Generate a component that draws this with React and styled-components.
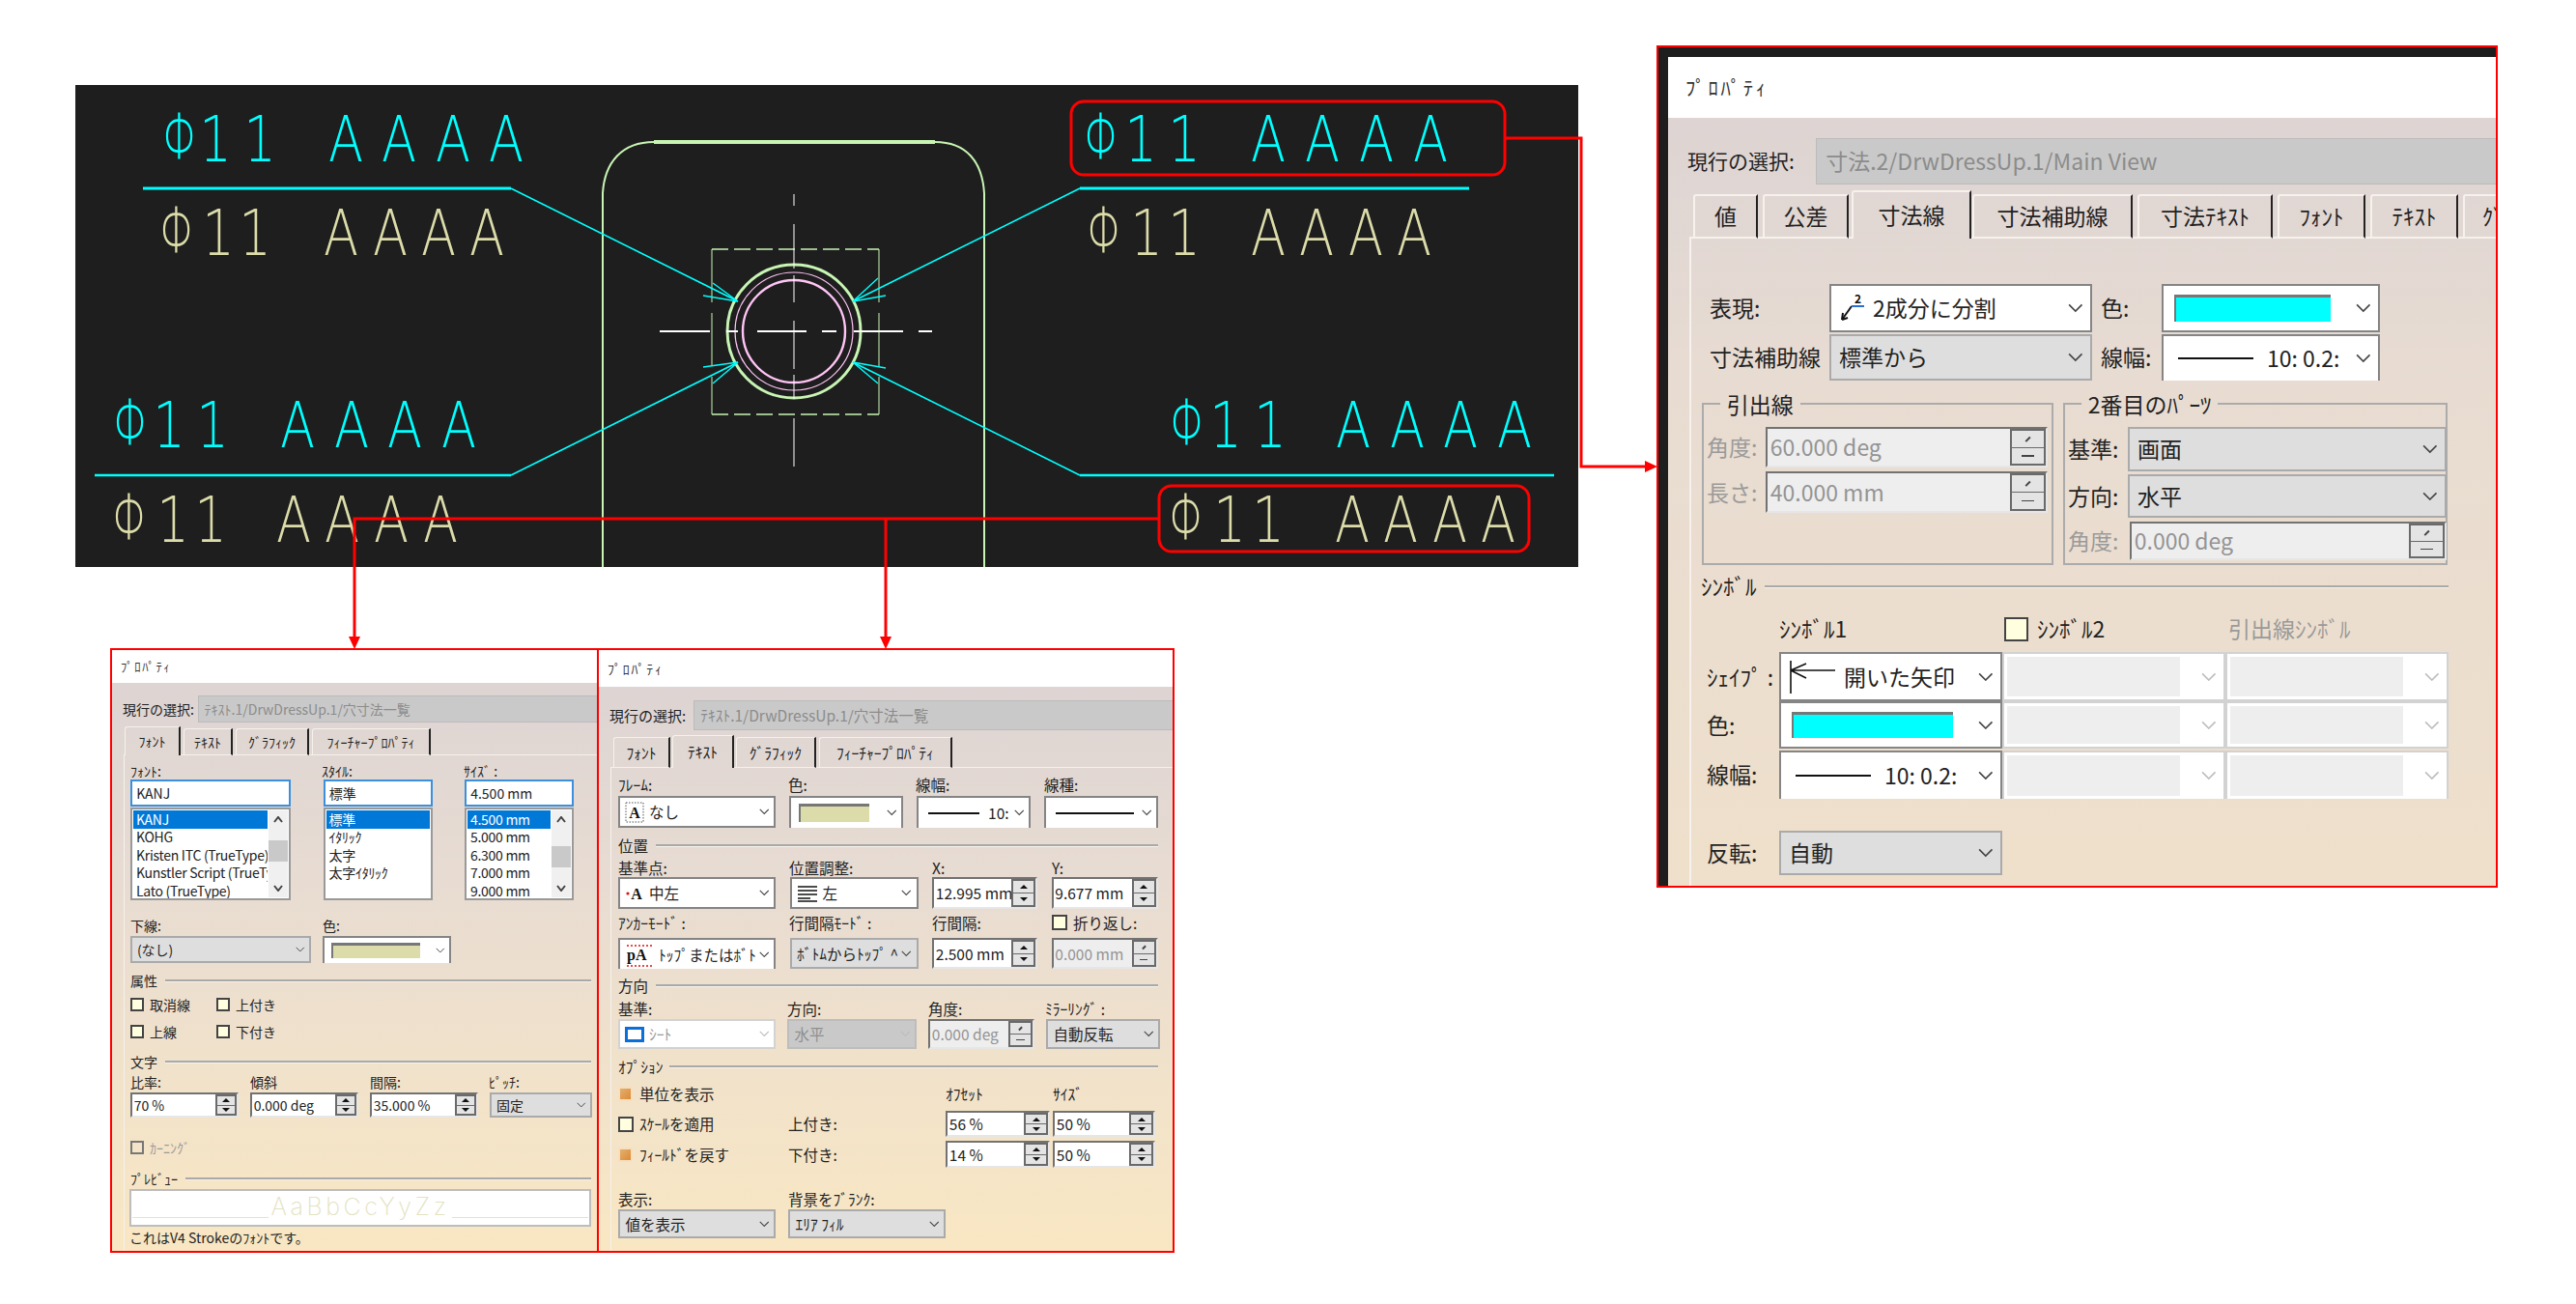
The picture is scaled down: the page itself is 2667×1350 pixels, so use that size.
import React from "react";
import styled, { createGlobalStyle } from "styled-components";

const GlobalStyle = createGlobalStyle`
  html, body { margin: 0; background: #fff; }
  body { width: 2667px; height: 1350px; overflow: hidden; font-family: "Noto Sans CJK JP", sans-serif; }
`;

const Page = styled.div`
  position: relative;
  display: flex;
  align-items: flex-start;
  box-sizing: border-box;
  width: 2667px;
  height: 1350px;
  padding-left: 78px;
`;

const LeftColumn = styled.div`
  width: 1556px;
  margin-top: 88px;
`;

const DrawingSvg = styled.svg`
  display: block;
  width: 1556px;
  height: 499px;
  background: #1e1e1e;
`;

const DimLabel = styled.text`
  font-family: "DejaVu Sans ExtraLight", "DejaVu Sans Light", "Inter", sans-serif;
  font-weight: 200;
  font-size: 66px;
  text-anchor: middle;
`;

const DialogRow = styled.div`
  display: flex;
  margin: 84px 0 0 36px;
`;

const Dialog = styled.div`
  display: flex;
  flex-direction: column;
  flex: none;
  box-sizing: border-box;
  width: ${(p) => p.$w}px;
  height: ${(p) => p.$h}px;
  margin: ${(p) => p.$margin || "0"};
  border: 2px solid #f00;
  overflow: hidden;
  font-size: ${(p) => p.$fs}px;
  line-height: 1.2;
  color: #222;
`;

const ShotFrame = styled.div`
  display: flex;
  flex-direction: column;
  flex: 1;
  min-height: 0;
  border-left: 10px solid #1e1e1e;
  border-top: 10px solid #1e1e1e;
`;

const TitleBar = styled.div`
  display: flex;
  align-items: center;
  flex: none;
  height: ${(p) => p.$h}px;
  padding-left: ${(p) => p.$pl}px;
  background: #fff;
  font-size: 0.9em;
  letter-spacing: 0.13em;
  color: #333;
`;

const Body = styled.div`
  display: flex;
  flex-direction: column;
  flex: 1;
  min-height: 0;
  background: linear-gradient(#ddd4d3, #e8dcd2 35%, ${(p) => p.$end});
`;

const SelRow = styled.div`
  display: grid;
  flex: none;
  grid-template-columns: ${(p) => p.$col}px 1fr;
  height: ${(p) => p.$h}px;
  margin-top: ${(p) => p.$mt}px;
  padding-left: ${(p) => p.$pl}px;
`;

const SelLabel = styled.div`
  display: flex;
  align-items: center;
  font-size: ${(p) => p.$fs}px;
  white-space: nowrap;
`;

const SelField = styled.div`
  display: flex;
  align-items: center;
  padding-left: 0.4em;
  background: #c9c9c9;
  border: 1px solid #bbb;
  border-right: none;
  color: #8c8c8c;
  white-space: nowrap;
`;

const TabStrip = styled.div`
  display: flex;
  align-items: flex-end;
  flex: none;
  height: ${(p) => p.$h}px;
  margin: ${(p) => p.$mt}px 0 0 ${(p) => p.$ml}px;
`;

const TabFill = styled.div`
  flex: ${(p) => (p.$w ? `0 0 ${p.$w}px` : 1)};
  border-bottom: ${(p) => p.$line}px solid #f6f1ec;
`;

const Tab = styled.div`
  display: flex;
  align-items: center;
  justify-content: center;
  flex: none;
  box-sizing: border-box;
  width: ${(p) => p.$w}px;
  height: ${(p) => (p.$on ? "100%" : `calc(100% - ${p.$drop}px)`)};
  border-top: ${(p) => p.$line}px solid #f6f1ec;
  border-left: ${(p) => p.$line}px solid #f6f1ec;
  border-right: 2px solid #222;
  border-bottom: ${(p) => (p.$on ? 0 : p.$line)}px solid #f6f1ec;
  border-top-left-radius: 3px;
  white-space: nowrap;
  overflow: hidden;
`;

const Panel = styled.div`
  flex: 1;
  min-height: 0;
  margin-left: ${(p) => p.$ml}px;
  padding-left: ${(p) => p.$pl}px;
  border-left: ${(p) => p.$line}px solid #f6f1ec;
`;

const Row = styled.div`
  display: grid;
  grid-template-columns: ${(p) => p.$cols};
  column-gap: ${(p) => p.$gap || 0}px;
  height: ${(p) => p.$h}px;
  margin-top: ${(p) => p.$mt || 0}px;
  margin-left: ${(p) => p.$ml || 0}px;
`;

const Lab = styled.div`
  display: flex;
  align-items: center;
  min-width: 0;
  margin-left: ${(p) => p.$ml || 0}px;
  white-space: nowrap;
  color: ${(p) => (p.$off ? "#9a9a9a" : "inherit")};
`;

const ComboBox = styled.div`
  display: flex;
  align-items: center;
  box-sizing: border-box;
  min-width: 0;
  height: 100%;
  padding: 0 0.3em 0 0.35em;
  overflow: hidden;
  white-space: nowrap;
  border: 2px solid ${(p) => ({ white: "#858585", gray: "#aaa", dark: "#bdbdbd", faded: "#d2d2d2" }[p.$kind])};
  border-bottom-width: ${(p) => (p.$open ? 0 : 2)}px;
  background: ${(p) => ({ white: "#fff", gray: "#dedede", dark: "#c9c9c9", faded: "#fff" }[p.$kind])};
  color: ${(p) => (p.$kind === "dark" ? "#8f8f8f" : "inherit")};
`;

const ComboText = styled.span`
  flex: 1;
  align-self: stretch;
  display: flex;
  align-items: center;
  gap: 0.3em;
  min-width: 0;
  overflow: hidden;
`;

const ChevronSvg = styled.svg`
  flex: none;
  width: 0.68em;
  height: 0.41em;
  margin-left: 0.2em;
  fill: none;
  stroke: ${(p) => (p.$off ? "#bdbdbd" : "#444")};
  stroke-width: 1.4;
`;

const Swatch = styled.span`
  flex: 1;
  align-self: stretch;
  margin: 0.38em 0.95em 0.38em 0.15em;
  background: ${(p) => p.$color};
  border-top: 3px solid #777;
  border-left: 2px solid #777;
`;

const FadedFill = styled.span`
  flex: 1;
  align-self: stretch;
  margin: 3px 0.8em 3px -0.2em;
  background: #eee;
`;

const LineSample = styled.span`
  flex: 0 0 ${(p) => p.$w}em;
  height: 2px;
  margin: 0 0.3em;
  background: #111;
`;

const SpinBox = styled.div`
  display: flex;
  box-sizing: border-box;
  min-width: 0;
  height: 100%;
  margin-left: ${(p) => p.$ml || 0}px;
  border: 2px solid;
  border-color: #727272 #e6e6e6 #e6e6e6 #727272;
  background: ${(p) => (p.$off ? "#eee" : "#fff")};
  color: ${(p) => (p.$off ? "#949494" : "inherit")};
`;

const SpinText = styled.span`
  flex: 1;
  display: flex;
  align-items: center;
  min-width: 0;
  padding-left: 0.12em;
  overflow: hidden;
  white-space: nowrap;
`;

const SpinBtns = styled.span`
  display: flex;
  flex-direction: column;
  flex: none;
  gap: 1px;
  box-sizing: border-box;
  width: 1.6em;
  border: 2px solid #6a6a6a;
  background: #6a6a6a;
`;

const SpinBtn = styled.span`
  display: flex;
  align-items: center;
  justify-content: center;
  flex: 1;
  background: #e4e4e4;
`;

const Tri = styled.i`
  width: 0;
  height: 0;
  border-left: 0.32em solid transparent;
  border-right: 0.32em solid transparent;
  ${(p) => (p.$up ? "border-bottom" : "border-top")}: 0.32em solid #111;
`;

const OffMark = styled.i`
  width: 0.55em;
  height: 1.5px;
  background: #444;
  transform: rotate(${(p) => (p.$up ? "-45deg" : "0deg")}) scaleX(${(p) => (p.$up ? 0.5 : 1)});
`;

const GroupRow = styled.div`
  display: grid;
  grid-template-columns: 364px 398px;
  column-gap: 10px;
  height: 182px;
  margin-top: 9px;
`;

const Group = styled.fieldset`
  box-sizing: border-box;
  min-width: 0;
  margin: 0;
  padding: 0 3px;
  border: 2px solid #ababab;
`;

const GroupTitle = styled.legend`
  margin-left: 0.6em;
  padding: 0 0.3em;
  line-height: 30px;
`;

const Sep = styled.div`
  display: flex;
  align-items: center;
  gap: ${(p) => p.$gap || 8}px;
  width: ${(p) => p.$w}px;
  height: ${(p) => p.$h}px;
  margin-top: ${(p) => p.$mt}px;
  margin-left: ${(p) => p.$ml || 0}px;
  white-space: nowrap;
  &::after {
    content: "";
    flex: 1;
    height: 2px;
    background: #a9a9a9;
    box-shadow: 0 1px 0 #f8f4ee;
  }
`;

const Check = styled.span`
  flex: none;
  box-sizing: border-box;
  width: ${(p) => p.$s}px;
  height: ${(p) => p.$s}px;
  margin-right: ${(p) => p.$gap}px;
  border: 2px solid ${(p) => (p.$off ? "#777" : "#444")};
  background: ${(p) => (p.$off ? "transparent" : "#ffffe0")};
`;

const OrangeCheck = styled.span`
  flex: none;
  box-sizing: border-box;
  width: 15px;
  height: 15px;
  margin-right: 7px;
  border: 2px solid #f6dfc0;
  background: linear-gradient(135deg, #e2b070, #dd8a34);
`;

const InputBox = styled.div`
  display: flex;
  align-items: center;
  box-sizing: border-box;
  height: 28px;
  padding-left: 0.3em;
  background: #fff;
  border: 2px solid #3b8fdc;
`;

const ListBox = styled.div`
  display: flex;
  box-sizing: border-box;
  height: 96px;
  margin-top: 1px;
  padding: 1px;
  background: #fff;
  border: 2px solid #999;
  overflow: hidden;
`;

const ListItems = styled.div`
  flex: 1;
  min-width: 0;
`;

const ListRow = styled.div`
  display: flex;
  align-items: center;
  height: 18.5px;
  padding-left: 3px;
  overflow: hidden;
  white-space: nowrap;
  letter-spacing: -0.02em;
  background: ${(p) => (p.$on ? "#0078d7" : "transparent")};
  color: ${(p) => (p.$on ? "#fff" : "inherit")};
`;

const ScrollBar = styled.div`
  display: flex;
  flex-direction: column;
  align-items: center;
  flex: 0 0 20px;
  margin-left: 1px;
  background: #f0f0f0;
`;

const ScrollThumb = styled.div`
  flex: none;
  align-self: stretch;
  height: 22px;
  margin-top: ${(p) => p.$top}px;
  background: #c9c9c9;
`;

const ScrollArrow = styled.svg`
  flex: none;
  width: 10px;
  height: 7px;
  margin-top: ${(p) => (p.$down ? "auto" : "6px")};
  margin-bottom: ${(p) => (p.$down ? "6px" : "0")};
  fill: none;
  stroke: #444;
  stroke-width: 2;
`;

const PreviewBox = styled.div`
  display: flex;
  align-items: flex-end;
  box-sizing: border-box;
  width: 478px;
  height: 39px;
  margin: 2px 0 0 -1px;
  padding: 0 1px 7px;
  background: #fff;
  border: 2px solid #bdbdbd;
  &::before, &::after {
    content: "";
    flex: 1;
    height: 1px;
    background: #e6e4c4;
  }
`;

const PreviewText = styled.span`
  padding: 0 2px;
  font-family: "Inter", sans-serif;
  font-weight: 200;
  font-size: 25px;
  line-height: 24px;
  letter-spacing: 3.6px;
  color: #e4e2bf;
`;

const Footer = styled.div`
  display: flex;
  align-items: center;
  height: 18px;
  margin: 2px 0 0 -1px;
  white-space: nowrap;
`;

const ConnectorSvg = styled.svg`
  position: absolute;
  left: 0;
  top: 0;
  width: 2667px;
  height: 1350px;
  pointer-events: none;
`;

const Chevron = ({ off }) => (
  <ChevronSvg $off={off} viewBox="0 0 14 8">
    <polyline points="1,1 7,7 13,1" />
  </ChevronSvg>
);

const Combo = ({ kind = "white", open, off, children }) => (
  <ComboBox $kind={kind} $open={open}>
    <ComboText>{children}</ComboText>
    <Chevron off={off} />
  </ComboBox>
);

const FadedCombo = ({ open }) => (
  <ComboBox $kind="faded" $open={open}>
    <FadedFill />
    <Chevron off />
  </ComboBox>
);

const Spin = ({ value, off, ml }) => (
  <SpinBox $off={off} $ml={ml}>
    <SpinText>{value}</SpinText>
    <SpinBtns>
      <SpinBtn>{off ? <OffMark $up /> : <Tri $up />}</SpinBtn>
      <SpinBtn>{off ? <OffMark /> : <Tri />}</SpinBtn>
    </SpinBtns>
  </SpinBox>
);

const Tabs = ({ items, h, mt, ml, lead, line, drop }) => (
  <TabStrip $h={h} $mt={mt} $ml={ml}>
    <TabFill $w={lead} $line={line} />
    {items.map(([label, w, gap, on]) => (
      <React.Fragment key={label}>
        <Tab $w={w} $on={on} $line={line} $drop={drop}>
          {label}
        </Tab>
        {gap > 0 && <TabFill $w={gap} $line={line} />}
      </React.Fragment>
    ))}
    <TabFill $line={line} />
  </TabStrip>
);

const Scroll = ({ top }) => (
  <ScrollBar>
    <ScrollArrow viewBox="0 0 10 7">
      <polyline points="1,6 5,1 9,6" />
    </ScrollArrow>
    <ScrollThumb $top={top} />
    <ScrollArrow $down viewBox="0 0 10 7">
      <polyline points="1,1 5,6 9,1" />
    </ScrollArrow>
  </ScrollBar>
);

/* small pictures inside the combo boxes */
const SplitIcon = () => (
  <svg width="28" height="30" viewBox="0 0 28 30" style={{ flex: "none" }}>
    <path d="M3 27 L13 13" fill="none" stroke="#111" strokeWidth="2" />
    <path d="M13 13 H26" stroke="#2a6fd0" strokeWidth="2" />
    <path d="M3 27 L4 20 M3 27 L9 25" stroke="#111" strokeWidth="2" />
    <text x="16" y="10" fontSize="12" fontWeight="700" fill="#111">2</text>
  </svg>
);

const OpenArrowIcon = () => (
  <svg width="50" height="34" viewBox="0 0 50 34" style={{ flex: "none" }}>
    <path d="M2 0 V34 M2 10 H48 M2 10 L18 3 M2 10 L18 18" fill="none" stroke="#111" strokeWidth="1.6" />
  </svg>
);

const FrameIcon = () => (
  <svg width="20" height="22" viewBox="0 0 20 22" style={{ flex: "none" }}>
    <rect x="1" y="1" width="18" height="20" fill="#fff" stroke="#555" strokeDasharray="1.5 1.5" />
    <text x="10" y="17" textAnchor="middle" fontFamily="Liberation Serif" fontWeight="700" fontSize="16" fill="#111">A</text>
  </svg>
);

const PointIcon = () => (
  <svg width="20" height="20" viewBox="0 0 20 20" style={{ flex: "none" }}>
    <circle cx="3" cy="10" r="1.6" fill="#e01010" />
    <text x="12" y="16" textAnchor="middle" fontFamily="Liberation Serif" fontWeight="700" fontSize="16" fill="#111">A</text>
  </svg>
);

const AlignIcon = () => (
  <svg width="22" height="18" viewBox="0 0 22 18" style={{ flex: "none" }}>
    <path d="M1 2 H21 M1 6 H21 M1 10 H21 M1 14 H14 M1 17 H21" stroke="#111" strokeWidth="1.5" />
  </svg>
);

const AnchorIcon = () => (
  <svg width="30" height="26" viewBox="0 0 30 26" style={{ flex: "none" }}>
    <path d="M2 4 H29 M2 25 H29" stroke="#e01010" strokeDasharray="2 2" strokeWidth="1.4" />
    <text x="2" y="19" fontFamily="Liberation Serif" fontWeight="700" fontSize="16" fill="#111">pA</text>
  </svg>
);

const SheetIcon = () => (
  <svg width="20" height="16" viewBox="0 0 20 16" style={{ flex: "none" }}>
    <rect x="1.5" y="1.5" width="17" height="13" fill="#fff" stroke="#0a6fd8" strokeWidth="3" />
  </svg>
);

/* the stroke font of the drawing is tall and narrow, the diameter sign even more */
const SC = 0.8;
const PHI_SC = 0.66;
const Dim = ({ color, xs, y }) => (
  <g fill={color}>
    <DimLabel y={y - 2} x={xs[0] / PHI_SC} transform={`scale(${PHI_SC} 1)`}>Φ</DimLabel>
    <DimLabel
      y={y}
      x={xs.slice(1).map((v) => v / SC).join(" ")}
      transform={`scale(${SC} 1)`}
    >
      11 AAAA
    </DimLabel>
  </g>
);

const CYAN = "#00ffff";
const KHAKI = "#dcdcaa";
const GREEN = "#c8f5b4";
const PINK = "#ffc4f5";

const Drawing = () => (
  <DrawingSvg viewBox="0 0 1556 499">
    <g fill="none" stroke={GREEN}>
      <path d="M546 499 V112" strokeWidth="2" />
      <path d="M941 499 V112" strokeWidth="2" />
      <path d="M546 112 C548 80 566 59 599 59" strokeWidth="2" />
      <path d="M941 112 C939 80 923 59 890 59" strokeWidth="2" />
      <path d="M599 59 H890" strokeWidth="4" />
      <circle cx="744" cy="255" r="69" strokeWidth="3" />
      <path d="M659 170 H832 M659 341 H832" strokeWidth="1.6" strokeDasharray="17 6" />
      <path d="M659 170 V341 M832 170 V341" strokeWidth="1" strokeDasharray="55 11" />
    </g>
    <g fill="none" stroke={PINK}>
      <circle cx="744" cy="255" r="61" strokeWidth="1.2" />
      <circle cx="744" cy="255" r="53" strokeWidth="2.4" />
    </g>
    <g stroke="#fff">
      <path d="M605 255 H657 M674 255 H686 M706 255 H757 M773 255 H788 M806 255 H857 M873 255 H887" strokeWidth="2" />
      <path d="M744 113 V125 M744 144 V190 M744 197 V225 M744 244 V294 M744 300 V325 M744 345 V395" strokeWidth="1" />
    </g>
    <g fill="none" stroke={CYAN}>
      <path d="M70 107 H451 M1040 107 H1443" strokeWidth="3" />
      <path d="M20 404 H451 M1040 404 H1531" strokeWidth="2.4" />
      <path d="M451 107 L686 224" strokeWidth="1.6" />
      <path d="M1040 107 L805 224" strokeWidth="1.6" />
      <path d="M451 404 L686 287" strokeWidth="1.6" />
      <path d="M1040 404 L805 287" strokeWidth="1.6" />
      <path d="M686 224 L650 218 M686 224 L660 205 M805 224 L839 218 M805 224 L831 200 M686 287 L650 292 M686 287 L660 309 M805 287 L839 293 M805 287 L831 309" strokeWidth="1.4" />
    </g>
    <Dim color={CYAN} y={79} xs={[109, 145, 191, 235, 280, 335, 391, 446]} />
    <Dim color={KHAKI} y={176} xs={[106, 148, 186, 230, 275, 326, 376, 426]} />
    <Dim color={CYAN} y={79} xs={[1063, 1103, 1148, 1190, 1235, 1291, 1347, 1403]} />
    <Dim color={KHAKI} y={176} xs={[1066, 1109, 1148, 1190, 1235, 1285, 1336, 1386]} />
    <Dim color={CYAN} y={375} xs={[58, 97, 142, 185, 230, 286, 341, 397]} />
    <Dim color={CYAN} y={375} xs={[1152, 1191, 1237, 1280, 1323, 1379, 1434, 1490]} />
    <Dim color={KHAKI} y={473} xs={[57, 101, 140, 183, 226, 276, 327, 378]} />
    <Dim color={KHAKI} y={473} xs={[1151, 1195, 1235, 1278, 1322, 1372, 1423, 1473]} />
  </DrawingSvg>
);

const FontDialog = () => (
  <Dialog $w={506} $h={626} $fs={14}>
    <TitleBar $h={34} $pl={9}>ﾌﾟﾛﾊﾟﾃｨ</TitleBar>
    <Body $end="#f9e7c3">
      <SelRow $h={28} $mt={13} $pl={11} $col={78}>
        <SelLabel $fs={14}>現行の選択:</SelLabel>
        <SelField>ﾃｷｽﾄ.1/DrwDressUp.1/穴寸法一覧</SelField>
      </SelRow>
      <Tabs
        h={30}
        mt={4}
        ml={12}
        lead={1}
        line={1}
        drop={2}
        items={[
          ["ﾌｫﾝﾄ", 58, 3, true],
          ["ﾃｷｽﾄ", 51, 3],
          ["ｸﾞﾗﾌｨｯｸ", 76, 3],
          ["ﾌｨｰﾁｬｰﾌﾟﾛﾊﾟﾃｨ", 123, 0],
        ]}
      />
      <Panel $ml={12} $pl={6} $line={1}>
        <Row $mt={7} $h={18} $cols="198px 147px 113px">
          <Lab>ﾌｫﾝﾄ:</Lab>
          <Lab>ｽﾀｲﾙ:</Lab>
          <Lab>ｻｲｽﾞ :</Lab>
        </Row>
        <Row $h={125} $cols="166px 113px 113px" $gap={33.5}>
          <div>
            <InputBox>KANJ</InputBox>
            <ListBox>
              <ListItems>
                <ListRow $on>KANJ</ListRow>
                <ListRow>KOHG</ListRow>
                <ListRow>Kristen ITC (TrueType)</ListRow>
                <ListRow>Kunstler Script (TrueType)</ListRow>
                <ListRow>Lato (TrueType)</ListRow>
              </ListItems>
              <Scroll top={18} />
            </ListBox>
          </div>
          <div>
            <InputBox>標準</InputBox>
            <ListBox>
              <ListItems>
                <ListRow $on>標準</ListRow>
                <ListRow>ｲﾀﾘｯｸ</ListRow>
                <ListRow>太字</ListRow>
                <ListRow>太字ｲﾀﾘｯｸ</ListRow>
              </ListItems>
            </ListBox>
          </div>
          <div>
            <InputBox>4.500 mm</InputBox>
            <ListBox>
              <ListItems>
                <ListRow $on>4.500 mm</ListRow>
                <ListRow>5.000 mm</ListRow>
                <ListRow>6.300 mm</ListRow>
                <ListRow>7.000 mm</ListRow>
                <ListRow>9.000 mm</ListRow>
              </ListItems>
              <Scroll top={24} />
            </ListBox>
          </div>
        </Row>
        <Row $mt={17} $h={18} $cols="199px 133px">
          <Lab>下線:</Lab>
          <Lab>色:</Lab>
        </Row>
        <Row $mt={2} $h={28} $cols="187px 133px" $gap={12}>
          <Combo kind="gray">(なし)</Combo>
          <Combo open><Swatch $color={KHAKI} /></Combo>
        </Row>
        <Sep $mt={9} $h={18} $w={477}>属性</Sep>
        <Row $mt={7} $h={18} $cols="89px 100px">
          <Lab><Check $s={14} $gap={6} />取消線</Lab>
          <Lab><Check $s={14} $gap={6} />上付き</Lab>
        </Row>
        <Row $mt={10} $h={18} $cols="89px 100px">
          <Lab><Check $s={14} $gap={6} />上線</Lab>
          <Lab><Check $s={14} $gap={6} />下付き</Lab>
        </Row>
        <Sep $mt={13} $h={18} $w={477}>文字</Sep>
        <Row $mt={3} $h={18} $cols="124px 124px 123px 106px">
          <Lab>比率:</Lab>
          <Lab>傾斜</Lab>
          <Lab>間隔:</Lab>
          <Lab>ﾋﾟｯﾁ:</Lab>
        </Row>
        <Row $mt={2} $h={26} $cols="112px 112px 112px 106px" $gap={12}>
          <Spin value="70 %" />
          <Spin value="0.000 deg" />
          <Spin value="35.000 %" />
          <Combo kind="gray">固定</Combo>
        </Row>
        <Row $mt={22} $h={18} $cols="200px">
          <Lab $off><Check $off $s={14} $gap={6} />ｶｰﾆﾝｸﾞ</Lab>
        </Row>
        <Sep $mt={14} $h={18} $w={477}>ﾌﾟﾚﾋﾞｭｰ</Sep>
        <PreviewBox>
          <PreviewText>AaBbCcYyZz</PreviewText>
        </PreviewBox>
        <Footer>これはV4 Strokeのﾌｫﾝﾄです。</Footer>
      </Panel>
    </Body>
  </Dialog>
);

const TextDialog = () => (
  <Dialog $w={598} $h={626} $fs={15.5} $margin="0 0 0 -2px">
    <TitleBar $h={38} $pl={9}>ﾌﾟﾛﾊﾟﾃｨ</TitleBar>
    <Body $end="#f9e7c3">
      <SelRow $h={31} $mt={14} $pl={11} $col={87}>
        <SelLabel $fs={15}>現行の選択:</SelLabel>
        <SelField>ﾃｷｽﾄ.1/DrwDressUp.1/穴寸法一覧</SelField>
      </SelRow>
      <Tabs
        h={34}
        mt={5}
        ml={12}
        lead={3}
        line={1}
        drop={2}
        items={[
          ["ﾌｫﾝﾄ", 59, 2],
          ["ﾃｷｽﾄ", 64, 2, true],
          ["ｸﾞﾗﾌｨｯｸ", 83, 3],
          ["ﾌｨｰﾁｬｰﾌﾟﾛﾊﾟﾃｨ", 138, 0],
        ]}
      />
      <Panel $ml={12} $pl={7} $line={1}>
        <Row $mt={7} $h={20} $cols="176px 132px 133px 118px">
          <Lab>ﾌﾚｰﾑ:</Lab>
          <Lab>色:</Lab>
          <Lab>線幅:</Lab>
          <Lab>線種:</Lab>
        </Row>
        <Row $mt={2} $h={33} $cols="163px 118px 118px 118px" $gap={14}>
          <Combo><FrameIcon />なし</Combo>
          <Combo open><Swatch $color={KHAKI} /></Combo>
          <Combo open><LineSample $w={3.4} />10:</Combo>
          <Combo open><LineSample $w={5.2} /></Combo>
        </Row>
        <Sep $mt={8} $h={20} $w={559}>位置</Sep>
        <Row $mt={3} $h={20} $cols="177px 148px 124px 110px">
          <Lab>基準点:</Lab>
          <Lab>位置調整:</Lab>
          <Lab>X:</Lab>
          <Lab>Y:</Lab>
        </Row>
        <Row $h={33} $cols="163px 133px 109px 110px" $gap={14.5}>
          <Combo><PointIcon />中左</Combo>
          <Combo><AlignIcon />左</Combo>
          <Spin value="12.995 mm" />
          <Spin value="9.677 mm" />
        </Row>
        <Row $mt={4} $h={20} $cols="177px 148px 124px 110px">
          <Lab>ｱﾝｶｰﾓｰﾄﾞ :</Lab>
          <Lab>行間隔ﾓｰﾄﾞ :</Lab>
          <Lab>行間隔:</Lab>
          <Lab><Check $s={16} $gap={6} />折り返し:</Lab>
        </Row>
        <Row $mt={6} $h={32} $cols="163px 133px 109px 110px" $gap={14.5}>
          <Combo open><AnchorIcon />ﾄｯﾌﾟまたはﾎﾞﾄﾑ</Combo>
          <Combo kind="gray">ﾎﾞﾄﾑからﾄｯﾌﾟ ^</Combo>
          <Spin value="2.500 mm" />
          <Spin off value="0.000 mm" />
        </Row>
        <Sep $mt={7} $h={20} $w={559}>方向</Sep>
        <Row $mt={4} $h={20} $cols="175px 146px 121px 118px">
          <Lab>基準:</Lab>
          <Lab>方向:</Lab>
          <Lab>角度:</Lab>
          <Lab>ﾐﾗｰﾘﾝｸﾞ :</Lab>
        </Row>
        <Row $mt={1} $h={31} $cols="163px 134px 110px 118px" $gap={12}>
          <ComboBox $kind="faded">
            <ComboText><SheetIcon /><Lab $off>ｼｰﾄ</Lab></ComboText>
            <Chevron off />
          </ComboBox>
          <Combo kind="dark" off>水平</Combo>
          <Spin off value="0.000 deg" />
          <Combo kind="gray">自動反転</Combo>
        </Row>
        <Sep $mt={8} $h={20} $w={559} $gap={6}>ｵﾌﾟｼｮﾝ</Sep>
        <Row $mt={8} $h={20} $cols="339px 111px 108px">
          <Lab><OrangeCheck />単位を表示</Lab>
          <Lab>ｵﾌｾｯﾄ</Lab>
          <Lab>ｻｲｽﾞ</Lab>
        </Row>
        <Row $mt={8} $h={27} $cols="176px 163px 108px 109px">
          <Lab><Check $s={16} $gap={6} />ｽｹｰﾙを適用</Lab>
          <Lab>上付き:</Lab>
          <Spin value="56 %" />
          <Spin ml={3} value="50 %" />
        </Row>
        <Row $mt={4} $h={28} $cols="176px 163px 108px 109px">
          <Lab><OrangeCheck />ﾌｨｰﾙﾄﾞを戻す</Lab>
          <Lab>下付き:</Lab>
          <Spin value="14 %" />
          <Spin ml={3} value="50 %" />
        </Row>
        <Row $mt={22} $h={20} $cols="176px 176px">
          <Lab>表示:</Lab>
          <Lab>背景をﾌﾞﾗﾝｸ:</Lab>
        </Row>
        <Row $mt={1} $h={30} $cols="163px 163px" $gap={13}>
          <Combo kind="gray">値を表示</Combo>
          <Combo kind="gray">ｴﾘｱ ﾌｨﾙ</Combo>
        </Row>
      </Panel>
    </Body>
  </Dialog>
);

const SYMBOL_COLS = "80px 231px 231px 231px";

const DimensionDialog = () => (
  <Dialog $w={871} $h={872} $fs={23} $margin="47px 0 0 81px">
    <ShotFrame>
      <TitleBar $h={63} $pl={18}>ﾌﾟﾛﾊﾟﾃｨ</TitleBar>
      <Body $end="#efe0cb">
        <SelRow $h={48} $mt={21} $pl={20} $col={133}>
          <SelLabel $fs={21}>現行の選択:</SelLabel>
          <SelField>寸法.2/DrwDressUp.1/Main View</SelField>
        </SelRow>
        <Tabs
          h={50}
          mt={6}
          ml={22}
          lead={4}
          line={2}
          drop={4}
          items={[
            ["値", 67, 5],
            ["公差", 89, 3],
            ["寸法線", 124, 1, true],
            ["寸法補助線", 166, 5],
            ["寸法ﾃｷｽﾄ", 140, 5],
            ["ﾌｫﾝﾄ", 91, 5],
            ["ﾃｷｽﾄ", 91, 5],
            ["ｸﾞﾗﾌｨｯｸ", 120, 0],
          ]}
        />
        <Panel $ml={22} $pl={11} $line={2}>
          <Row $mt={47} $h={50} $ml={8} $cols="124px 272px 72px 226px">
            <Lab>表現:</Lab>
            <Combo><SplitIcon />2成分に分割</Combo>
            <Lab $ml={9}>色:</Lab>
            <Combo><Swatch $color={CYAN} /></Combo>
          </Row>
          <Row $mt={2} $h={48} $ml={8} $cols="124px 272px 72px 226px">
            <Lab>寸法補助線</Lab>
            <Combo kind="gray">標準から</Combo>
            <Lab $ml={9}>線幅:</Lab>
            <Combo open><LineSample $w={3.4} />10: 0.2:</Combo>
          </Row>
          <GroupRow>
            <Group>
              <GroupTitle>引出線</GroupTitle>
              <Row $mt={9} $h={42} $cols="61px 292px">
                <Lab $off>角度:</Lab>
                <Spin off value="60.000 deg" />
              </Row>
              <Row $mt={4} $h={43} $cols="61px 292px">
                <Lab $off>長さ:</Lab>
                <Spin off value="40.000 mm" />
              </Row>
            </Group>
            <Group>
              <GroupTitle>2番目のﾊﾟｰﾂ</GroupTitle>
              <Row $mt={9} $h={46} $cols="62px 330px">
                <Lab>基準:</Lab>
                <Combo kind="gray">画面</Combo>
              </Row>
              <Row $mt={3} $h={45} $cols="62px 330px">
                <Lab>方向:</Lab>
                <Combo kind="gray">水平</Combo>
              </Row>
              <Row $mt={4} $h={40} $cols="62px 330px">
                <Lab $off>角度:</Lab>
                <Spin off ml={2} value="0.000 deg" />
              </Row>
            </Group>
          </GroupRow>
          <Sep $mt={7} $h={30} $w={774} $ml={-1}>ｼﾝﾎﾞﾙ</Sep>
          <Row $mt={14} $h={30} $cols={SYMBOL_COLS}>
            <span />
            <Lab>ｼﾝﾎﾞﾙ1</Lab>
            <Lab $ml={2}><Check $s={25} $gap={9} />ｼﾝﾎﾞﾙ2</Lab>
            <Lab $off $ml={3}>引出線ｼﾝﾎﾞﾙ</Lab>
          </Row>
          <Row $mt={9} $h={51} $cols={SYMBOL_COLS}>
            <Lab $ml={5}>ｼｪｲﾌﾟ :</Lab>
            <Combo><OpenArrowIcon />開いた矢印</Combo>
            <FadedCombo />
            <FadedCombo />
          </Row>
          <Row $h={49} $cols={SYMBOL_COLS}>
            <Lab $ml={5}>色:</Lab>
            <Combo><Swatch $color={CYAN} /></Combo>
            <FadedCombo />
            <FadedCombo />
          </Row>
          <Row $mt={2} $h={50} $cols={SYMBOL_COLS}>
            <Lab $ml={5}>線幅:</Lab>
            <Combo open><LineSample $w={3.4} />10: 0.2:</Combo>
            <FadedCombo open />
            <FadedCombo open />
          </Row>
          <Row $mt={33} $h={46} $cols={SYMBOL_COLS}>
            <Lab $ml={5}>反転:</Lab>
            <Combo kind="gray">自動</Combo>
          </Row>
        </Panel>
      </Body>
    </ShotFrame>
  </Dialog>
);

const Connectors = () => (
  <ConnectorSvg viewBox="0 0 2667 1350">
    <g fill="none" stroke="#f00" strokeWidth="3">
      <rect x="1109" y="105" width="449" height="76" rx="13" />
      <rect x="1200" y="503" width="383" height="68" rx="13" />
      <path d="M1558 143 H1637 V483 H1704" />
      <path d="M1200 537 H367 V660" />
      <path d="M917 537 V660" />
    </g>
    <g fill="#f00">
      <polygon points="1716,483 1703,477 1703,489" />
      <polygon points="367,672 361,659 373,659" />
      <polygon points="917,672 911,659 923,659" />
    </g>
  </ConnectorSvg>
);

export default function App() {
  return (
    <Page>
      <GlobalStyle />
      <LeftColumn>
        <Drawing />
        <DialogRow>
          <FontDialog />
          <TextDialog />
        </DialogRow>
      </LeftColumn>
      <DimensionDialog />
      <Connectors />
    </Page>
  );
}
